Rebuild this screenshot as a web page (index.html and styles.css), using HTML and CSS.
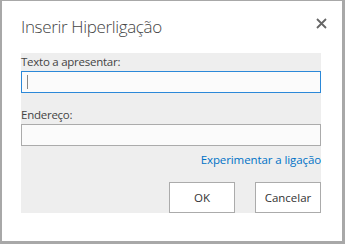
FILE: index.html
```html
<!DOCTYPE html>
<html>
<head>
<meta charset="utf-8">
<link rel="stylesheet" href="styles.css">
</head>
<body>
<div class="dialog">
  <div class="header">
    <h1 class="title">Inserir Hiperligação</h1>
    <button class="close" aria-label="Fechar">
      <svg width="11" height="11" viewBox="0 0 11 11"><path d="M1 1L10 10M10 1L1 10" stroke="#666" stroke-width="1.8" fill="none"/></svg>
    </button>
  </div>
  <div class="panel">
    <label class="label">Texto a apresentar:</label>
    <div class="input focused"><span class="caret"></span></div>
    <label class="label second">Endereço:</label>
    <div class="input"></div>
    <div class="linkrow"><a class="link" href="#">Experimentar a ligação</a></div>
    <div class="buttons">
      <button class="btn">OK</button>
      <button class="btn">Cancelar</button>
    </div>
  </div>
</div>
</body>
</html>
```
FILE: styles.css
```css
html, body { margin: 0; padding: 0; background: #fff; }
.dialog {
  width: 345px; height: 244px; box-sizing: border-box;
  border-style: solid; border-color: #a8a8a8;
  border-width: 1px 3px 3px 2px;
  background: #fff;
  font-family: "Segoe UI", "Open Sans", "Noto Sans", sans-serif;
  color: #444;
}
.header {
  display: flex; justify-content: space-between; align-items: flex-start;
  height: 52px; padding: 0 15px 0 19px; box-sizing: border-box;
}
.title {
  margin: 0; padding-top: 14px;
  font-size: 17px; font-weight: 300; line-height: 24px; color: #444;
  letter-spacing: -0.35px;
}
.close {
  margin-top: 16px; padding: 0; border: 0; background: none;
  width: 12px; height: 12px; display: flex; align-items: center; justify-content: center;
}
.panel {
  margin: 0 0 0 19px; width: 300px; height: 160px; background: #eeeeee;
  display: flex; flex-direction: column;
}
.label { display: block; font-size: 11.5px; line-height: 18px; height: 18px; color: #444; letter-spacing: -0.25px; }
.label.second { margin-top: 13px; }
.input {
  height: 22px; box-sizing: border-box; border: 1px solid #ababab; background: #fbfbfb;
  position: relative;
}
.input.focused { border-color: #2b88d8; }
.caret { position: absolute; left: 5px; top: 3px; width: 1px; height: 14px; background: #888; }
.linkrow { text-align: right; height: 18px; margin-top: 1px; }
.link { font-size: 11.5px; line-height: 18px; color: #0072c6; text-decoration: none; letter-spacing: -0.1px; }
.buttons { display: flex; justify-content: flex-end; gap: 20px; margin-top: auto; }
.btn {
  width: 66px; height: 31px; box-sizing: border-box; border: 1px solid #ababab; background: #fff;
  font-family: inherit; font-size: 11.5px; color: #333; padding: 0;
}
```
